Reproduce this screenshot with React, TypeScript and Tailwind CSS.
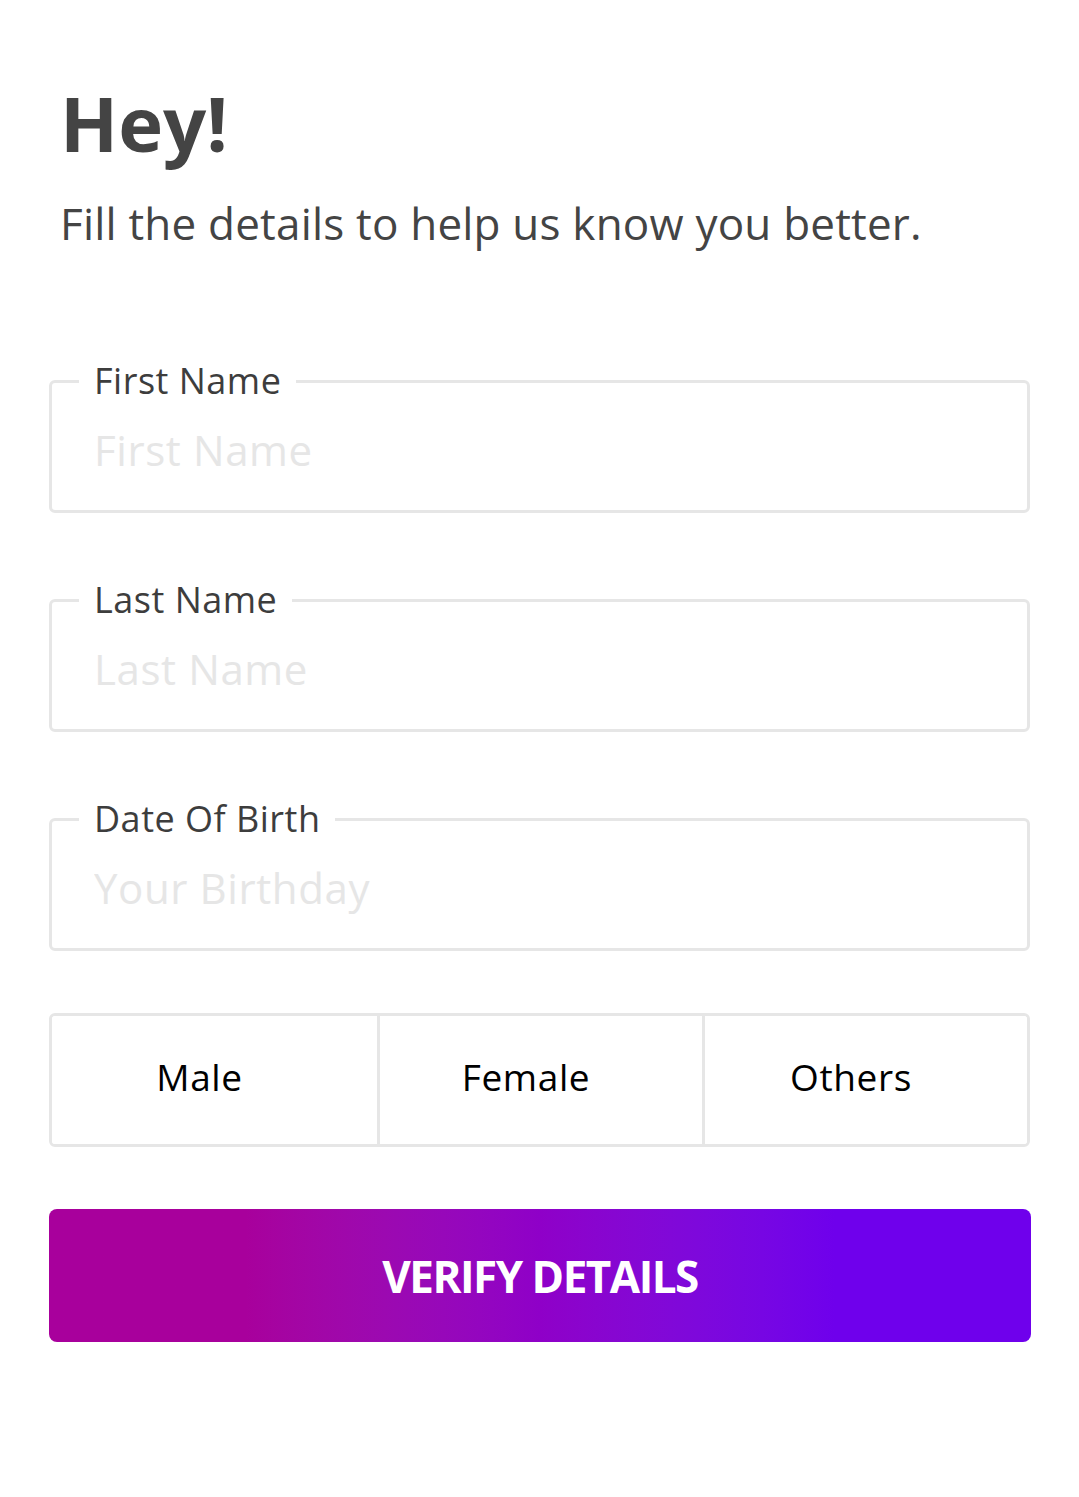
import { useState } from 'react';

const font = { fontFamily: '"Open Sans", "Noto Sans", sans-serif' };

function Field({ label, placeholder }: { label: string; placeholder: string }) {
  return (
    <fieldset className="border-[3px] border-[#e6e6e6] rounded-[6px] pl-[27px] pr-[27px] pb-[12px]">
      <legend className="px-[15px] text-[36px] leading-[40px] tracking-[0.5px] text-[#3d3d3d]">{label}</legend>
      <input
        type="text"
        placeholder={placeholder}
        className="w-full h-[97px] pl-[15px] text-[42px] tracking-[0.6px] text-[#333] placeholder:text-[#e6e6e6] outline-none bg-transparent"
        style={font}
      />
    </fieldset>
  );
}

export default function App() {
  const [gender, setGender] = useState('');

  return (
    <div className="min-h-[1497px] w-[1079px] bg-white" style={font}>
      <div className="px-[49px] pt-[78px]">
        <div className="pl-[11px]">
          <h1 className="text-[76px] leading-[90px] font-bold text-[#444]">Hey!</h1>
          <p className="mt-[27px] text-[44px] leading-[56px] tracking-[0.2px] text-[#444]">
            Fill the details to help us know you better.
          </p>
        </div>

        <div className="mt-[110px] w-[981px] flex flex-col gap-[67px]">
          <Field label="First Name" placeholder="First Name" />
          <Field label="Last Name" placeholder="Last Name" />
          <Field label="Date Of Birth" placeholder="Your Birthday" />
        </div>

        <div className="mt-[62px] w-[981px] h-[134px] grid grid-cols-3 border-[3px] border-[#e6e6e6] rounded-[6px] overflow-hidden">
          {['Male', 'Female', 'Others'].map((g, i) => (
            <button
              key={g}
              onClick={() => setGender(g)}
              className={`pr-[30px] pb-[7px] text-[37px] tracking-[0.6px] text-black ${i > 0 ? 'border-l-[3px] border-[#e6e6e6]' : ''} ${gender === g ? 'bg-[#f4ecff]' : 'bg-white'}`}
            >
              {g}
            </button>
          ))}
        </div>

        <button className="mt-[62px] w-[982px] h-[133px] rounded-[8px] bg-gradient-to-r from-[#a8009c] from-[20%] via-[#8f00c8] to-[#6f00ec] to-[80%] text-white text-[44px] font-bold tracking-[-1.5px]">
          VERIFY DETAILS
        </button>
      </div>
    </div>
  );
}
